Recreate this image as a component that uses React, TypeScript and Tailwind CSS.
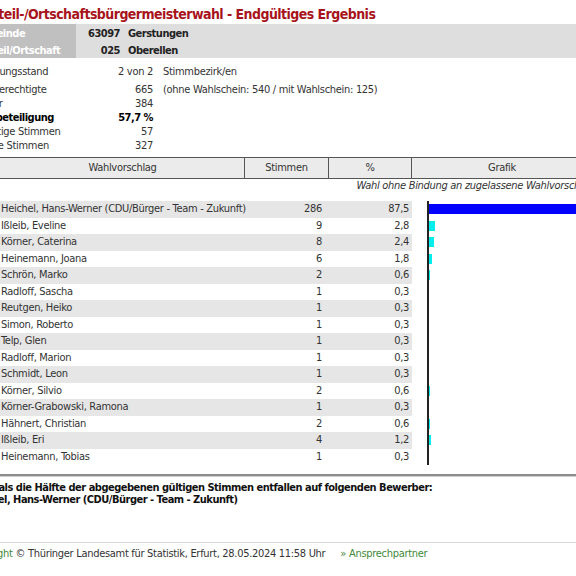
import React from "react";

const rows: [string, number, string, number][] = [
  ["Heichel, Hans-Werner (CDU/Bürger - Team - Zukunft)", 286, "87,5", 87.5],
  ["Ißleib, Eveline", 9, "2,8", 2.8],
  ["Körner, Caterina", 8, "2,4", 2.4],
  ["Heinemann, Joana", 6, "1,8", 1.8],
  ["Schrön, Marko", 2, "0,6", 0.6],
  ["Radloff, Sascha", 1, "0,3", 0.3],
  ["Reutgen, Heiko", 1, "0,3", 0.3],
  ["Simon, Roberto", 1, "0,3", 0.3],
  ["Telp, Glen", 1, "0,3", 0.3],
  ["Radloff, Marion", 1, "0,3", 0.3],
  ["Schmidt, Leon", 1, "0,3", 0.3],
  ["Körner, Silvio", 2, "0,6", 0.6],
  ["Körner-Grabowski, Ramona", 1, "0,3", 0.3],
  ["Hähnert, Christian", 2, "0,6", 0.6],
  ["Ißleib, Eri", 4, "1,2", 1.2],
  ["Heinemann, Tobias", 1, "0,3", 0.3],
];

const info: [string, string, string, boolean][] = [
  ["Wahlberechtigte", "665", "(ohne Wahlschein: 540 / mit Wahlschein: 125)", false],
  ["Wähler", "384", "", false],
  ["Wahlbeteiligung", "57,7 %", "", true],
  ["Ungültige Stimmen", "57", "", false],
  ["Gültige Stimmen", "327", "", false],
];

export default function App() {
  return (
    <div className="w-[576px] h-[576px] overflow-hidden bg-white text-[11px] tracking-[-0.3px] text-[#333] font-['DejaVu_Sans_Condensed','DejaVu_Sans',sans-serif]">
      <div className="-ml-[33px] w-[660px]">
        <h1 className="h-[24px] pl-[3px] pt-[5px] text-[14px] leading-[18px] font-bold tracking-[-0.55px] text-[#a8141c]">
          Ortsteil-/Ortschaftsbürgermeisterwahl - Endgültiges Ergebnis
        </h1>

        <div className="bg-[#dedede] font-bold tracking-[-0.5px] text-[#222]">
          <div className="flex h-[17px]">
            <div className="h-full w-[109px] bg-[#c0c0c0] pl-[6px] pt-[3px] leading-[13px] text-white">Gemeinde</div>
            <div className="w-[44px] pt-[3px] text-right leading-[13px]">63097</div>
            <div className="pl-[8px] pt-[3px] leading-[13px]">Gerstungen</div>
          </div>
          <div className="flex h-[17px]">
            <div className="h-full w-[109px] bg-[#c0c0c0] pl-[4px] pt-[3px] leading-[13px] text-white">Ortsteil/Ortschaft</div>
            <div className="w-[44px] pt-[3px] text-right leading-[13px]">025</div>
            <div className="pl-[8px] pt-[3px] leading-[13px]">Oberellen</div>
          </div>
        </div>

        <div className="mt-[7px] flex h-[14px] items-center">
          <div className="-ml-[4px] w-[124px]">Auszählungsstand</div>
          <div className="w-[66px] text-right">2 von 2</div>
          <div className="pl-[10px]">Stimmbezirk/en</div>
        </div>
        <div className="mt-[4px]">
          {info.map(([a, b, c, bold]) => (
            <div key={a} className={`flex h-[14px] items-center ${bold ? "font-bold tracking-[-0.5px] text-black" : ""}`}>
              <div className="w-[120px] pl-[3px]">{a}</div>
              <div className="w-[66px] text-right">{b}</div>
              <div className="pl-[10px]">{c}</div>
            </div>
          ))}
        </div>

        <div className="mt-[4px] flex h-[22px] w-[625px] border-y border-[#555] bg-[#ebebeb] text-[#333]">
          <div className="flex w-[278px] shrink-0 items-center justify-center border-r border-[#555] pl-[34px]">Wahlvorschlag</div>
          <div className="flex w-[84px] shrink-0 items-center justify-center border-r border-[#555]">Stimmen</div>
          <div className="flex w-[83px] shrink-0 items-center justify-center border-r border-[#555]">%</div>
          <div className="flex flex-1 items-center justify-center">Grafik</div>
        </div>
        <div className="h-[22px] w-[633px] pt-[1px] text-right italic leading-[12px] text-[#333]">
          Wahl ohne Bindung an zugelassene Wahlvorschläge
        </div>

        <div className="flex">
          <div className="w-[445px] shrink-0">
            {rows.map(([name, v, p], i) => (
              <div key={name} className={`flex h-[16.5px] items-center ${i % 2 === 0 ? "bg-[#e6e6e6]" : "bg-white"}`}>
                <div className="w-[278px] shrink-0 whitespace-nowrap pl-[34px]">{name}</div>
                <div className="w-[77px] shrink-0 text-right">{v}</div>
                <div className="w-[87px] shrink-0 text-right">{p}</div>
              </div>
            ))}
          </div>
          <div className="ml-[15px] w-[200px] border-l-2 border-[#222]">
            {rows.map(([name, , , pct], i) => (
              <div key={name} className="h-[16.5px] pt-[3px]">
                <div
                  className={`h-[10px] ${i === 0 ? "bg-[#0000ff]" : "bg-[#00eeee]"}`}
                  style={{ width: `${Math.floor(pct * 2.2)}px` }}
                />
              </div>
            ))}
          </div>
        </div>

        <div className="mt-[9px] h-[3px] w-[660px] border-t-2 border-b border-t-[#8c8c8c] border-b-[#d0d0d0]" />
        <div className="w-[660px] pt-[5px] pl-[2px] font-bold leading-[11.5px] tracking-[-0.5px] text-[#111]">
          <div>Mehr als die Hälfte der abgegebenen gültigen Stimmen entfallen auf folgenden Bewerber:</div>
          <div>Heichel, Hans-Werner (CDU/Bürger - Team - Zukunft)</div>
        </div>

        <div className="mt-[37px] w-[660px] border-t border-[#d6d6d6] pt-[5px]">
          <div className="flex h-[12px] items-center leading-[12px]">
            <span className="text-[#3f8a3a]">Copyright</span>
            <span>&nbsp;© Thüringer Landesamt für Statistik, Erfurt, 28.05.2024 11:58 Uhr</span>
            <span className="ml-[15px] text-[#3f8a3a]">» Ansprechpartner</span>
          </div>
        </div>
      </div>
    </div>
  );
}
